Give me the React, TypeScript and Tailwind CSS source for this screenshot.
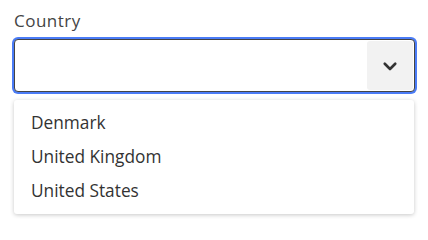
import React from 'react';

const countries = ['Denmark', 'United Kingdom', 'United States'];

function ChevronDown() {
  return (
    <svg width="18" height="18" viewBox="0 0 24 24" fill="none" stroke="#333" strokeWidth="3.5" strokeLinecap="round" strokeLinejoin="round">
      <path d="M5 9l7 7 7-7" />
    </svg>
  );
}

export default function App() {
  return (
    <div className="w-[428px] h-[229px] bg-white px-[14px] pt-[9px]" style={{ fontFamily: '"Open Sans", sans-serif' }}>
      <label className="block text-[17px] leading-[24px] tracking-[0.5px] text-[#444]">Country</label>
      <div className="mt-[6px] flex h-[53px] w-[401px] items-stretch rounded-[4px] border border-[#444] ring-2 ring-[#4b7cf6] bg-white p-px">
        <div className="flex-1" />
        <div className="flex w-[46px] items-center justify-center rounded-[3px] bg-[#f2f2f2]">
          <ChevronDown />
        </div>
      </div>
      <ul className="mt-[8px] w-[400px] rounded-[3px] bg-white pt-[6px] pb-[6px] shadow-[0_1px_4px_rgba(0,0,0,0.22)]">
        {countries.map((c) => (
          <li key={c} className="h-[34px] px-[17px] text-[17.3px] leading-[34px] text-[#333]">
            {c}
          </li>
        ))}
      </ul>
    </div>
  );
}
